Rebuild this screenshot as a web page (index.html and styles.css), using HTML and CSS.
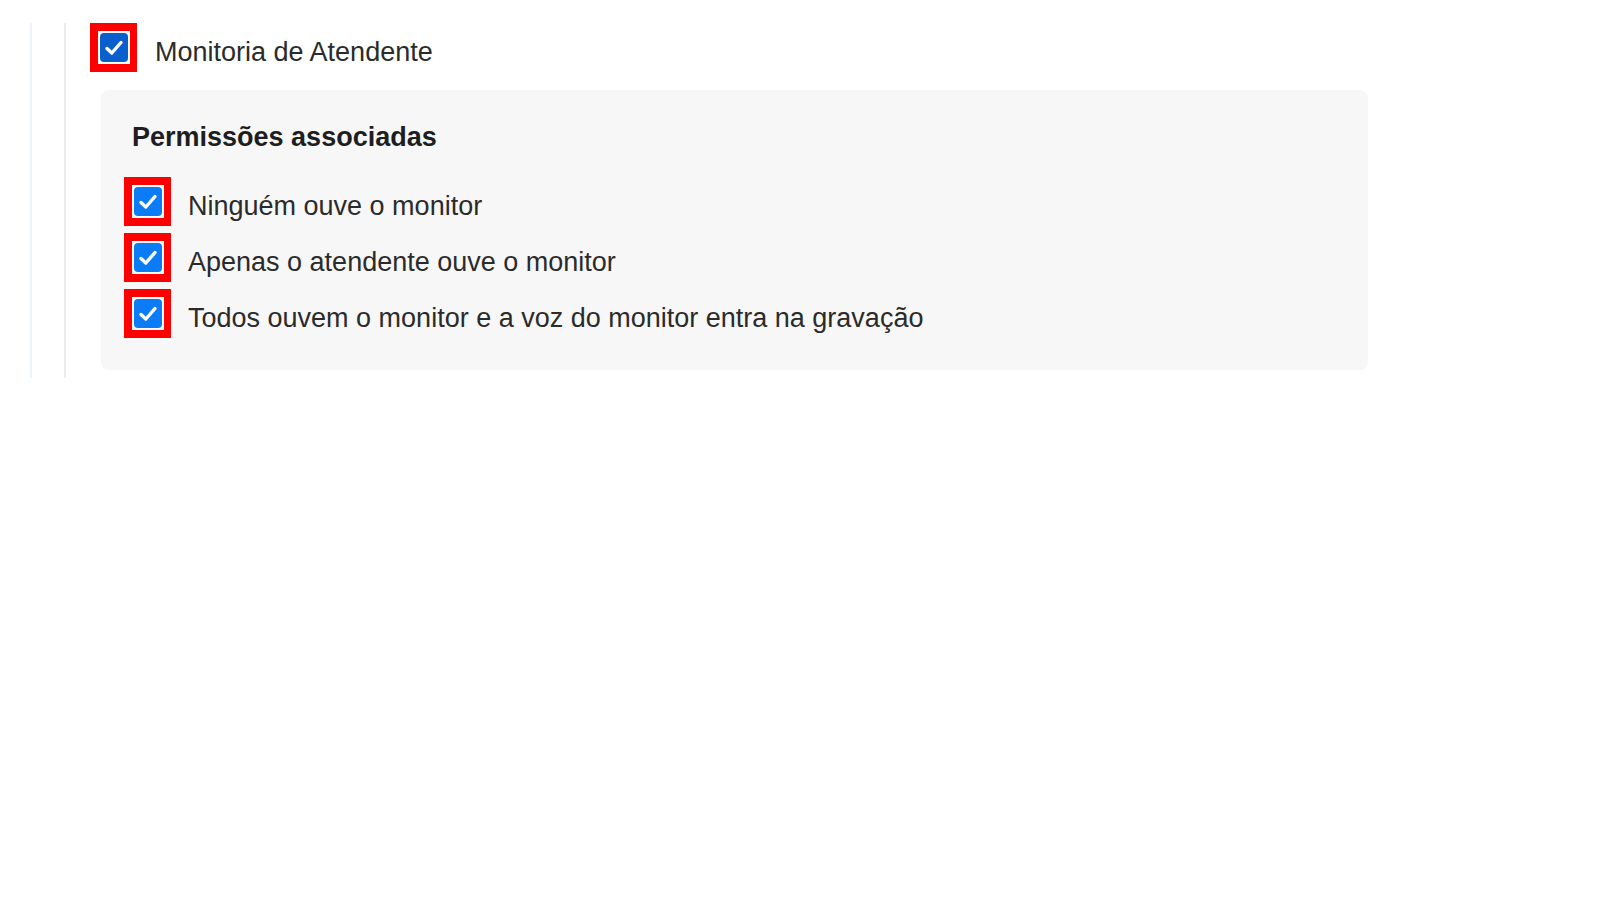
FILE: index.html
```html
<!DOCTYPE html>
<html lang="pt-BR">
<head>
<meta charset="utf-8">
<title>Monitoria de Atendente</title>
<link rel="stylesheet" href="styles.css">
</head>
<body>
<div class="tree">
  <div class="tree-inner">
    <label class="item item-main">
      <span class="hl"><span class="box box-dark"><svg viewBox="0 0 28 29" width="28" height="29"><path d="M7 15.5 L11.8 20 L21 9.5" fill="none" stroke="#fff" stroke-width="3.4" stroke-linecap="round" stroke-linejoin="round"/></svg></span></span>
      <span class="item-text">Monitoria de Atendente</span>
    </label>
    <div class="panel">
      <div class="panel-title">Permissões associadas</div>
      <div class="perm-list">
        <label class="item">
          <span class="hl"><span class="box"><svg viewBox="0 0 28 29" width="28" height="29"><path d="M7 15.5 L11.8 20 L21 9.5" fill="none" stroke="#fff" stroke-width="3.4" stroke-linecap="round" stroke-linejoin="round"/></svg></span></span>
          <span class="item-text">Ninguém ouve o monitor</span>
        </label>
        <label class="item">
          <span class="hl"><span class="box"><svg viewBox="0 0 28 29" width="28" height="29"><path d="M7 15.5 L11.8 20 L21 9.5" fill="none" stroke="#fff" stroke-width="3.4" stroke-linecap="round" stroke-linejoin="round"/></svg></span></span>
          <span class="item-text">Apenas o atendente ouve o monitor</span>
        </label>
        <label class="item">
          <span class="hl"><span class="box"><svg viewBox="0 0 28 29" width="28" height="29"><path d="M7 15.5 L11.8 20 L21 9.5" fill="none" stroke="#fff" stroke-width="3.4" stroke-linecap="round" stroke-linejoin="round"/></svg></span></span>
          <span class="item-text">Todos ouvem o monitor e a voz do monitor entra na gravação</span>
        </label>
      </div>
    </div>
  </div>
</div>
</body>
</html>
```
FILE: styles.css
```css
html, body {
  margin: 0;
  padding: 0;
  background: #ffffff;
}

body {
  font-family: "Liberation Sans", Arial, sans-serif;
  font-size: 27px;
  color: #2b2b2b;
  padding-top: 23px;
}

.tree {
  margin-left: 30px;
  border-left: 2px solid #edf4fd;
  padding-left: 32px;
  width: max-content;
}

.tree-inner {
  border-left: 2px solid #ececec;
  padding-left: 24px;
  padding-bottom: 8px;
}

.item {
  display: flex;
  align-items: center;
  gap: 17px;
  cursor: pointer;
}

.item-main {
  gap: 18px;
}

.item-text {
  line-height: 31px;
  margin-top: 10px;
}

.hl {
  display: inline-flex;
  box-sizing: border-box;
  width: 47px;
  height: 49px;
  border: 8px solid #ff0000;
  border-right-width: 7px;
  padding: 2px;
  background: #ffffff;
}

.box {
  display: flex;
  width: 28px;
  height: 29px;
  border-radius: 4px;
  background: #0b7bf6;
}

.box-dark {
  background: #0a5fcc;
}

.box svg {
  display: block;
}

.panel {
  margin-top: 18px;
  margin-left: 11px;
  width: 1267px;
  box-sizing: border-box;
  background: #f7f7f7;
  border-radius: 8px;
  padding: 32px 23px 32px 23px;
}

.panel-title {
  font-weight: bold;
  color: #1e1e1e;
  line-height: 31px;
  margin-left: 8px;
  margin-bottom: 24px;
}

.perm-list {
  display: flex;
  flex-direction: column;
  gap: 7px;
}
```
